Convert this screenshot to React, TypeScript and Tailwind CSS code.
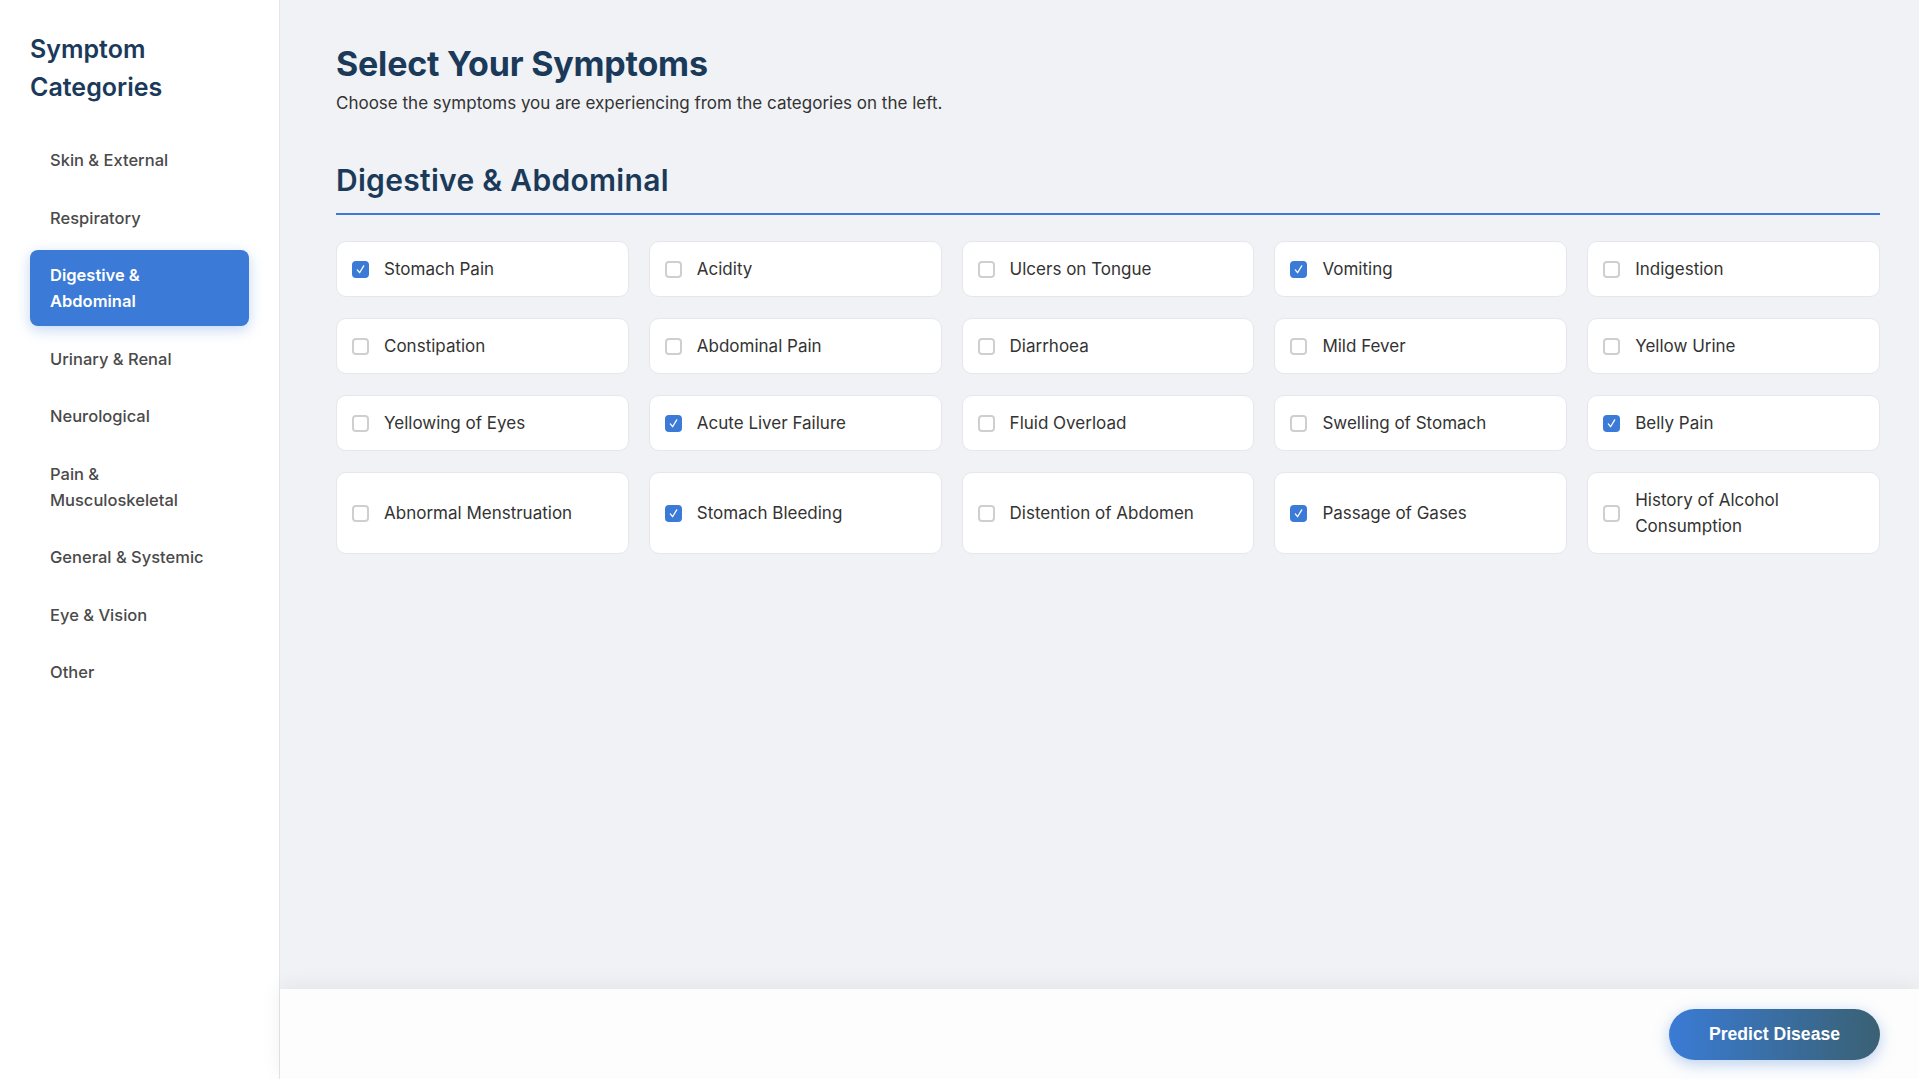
import React, { FC, useState } from "react";

const categories = [
  "Skin & External",
  "Respiratory",
  "Digestive & Abdominal",
  "Urinary & Renal",
  "Neurological",
  "Pain & Musculoskeletal",
  "General & Systemic",
  "Eye & Vision",
  "Other",
];

const symptoms = [
  "Stomach Pain",
  "Acidity",
  "Ulcers on Tongue",
  "Vomiting",
  "Indigestion",
  "Constipation",
  "Abdominal Pain",
  "Diarrhoea",
  "Mild Fever",
  "Yellow Urine",
  "Yellowing of Eyes",
  "Acute Liver Failure",
  "Fluid Overload",
  "Swelling of Stomach",
  "Belly Pain",
  "Abnormal Menstruation",
  "Stomach Bleeding",
  "Distention of Abdomen",
  "Passage of Gases",
  "History of Alcohol Consumption",
];

const SymptomCard: FC<{ label: string; checked: boolean; onToggle: () => void }> = (props) => {
  return (
    <label
      className="flex items-center gap-[15px] bg-white border border-[#e4e7ec] rounded-[10px] px-[15px] py-[14px] cursor-pointer"
      onClick={props.onToggle}
    >
      {props.checked ? (
        <span className="w-[17px] h-[17px] shrink-0 rounded-[4px] bg-[#3b7ad6] flex items-center justify-center">
          <svg width="11" height="11" viewBox="0 0 12 12" fill="none">
            <path d="M2.5 6.5 L5 9.5 L9.5 2" stroke="white" strokeWidth="1.4" strokeLinecap="round" strokeLinejoin="round" />
          </svg>
        </span>
      ) : (
        <span className="w-[17px] h-[17px] shrink-0 rounded-[4px] border-2 border-[#cfcfcf] bg-white" />
      )}
      <span className="text-[17px] leading-[26px] text-[#333]">{props.label}</span>
    </label>
  );
};

const App: FC = () => {
  const [active, setActive] = useState("Digestive & Abdominal");
  const [selected, setSelected] = useState<string[]>([
    "Stomach Pain",
    "Vomiting",
    "Acute Liver Failure",
    "Belly Pain",
    "Stomach Bleeding",
    "Passage of Gases",
  ]);

  const toggle = (s: string) =>
    setSelected((prev) => (prev.includes(s) ? prev.filter((x) => x !== s) : [...prev, s]));

  return (
    <div className="flex h-screen bg-[#f0f2f5] font-['Inter',sans-serif]">
      <aside className="w-[280px] shrink-0 bg-white border-r border-[#e3e5ea] px-[30px] pt-[30px]">
        <h2 className="text-[25px] leading-[38px] font-semibold text-[#1b3a5a] w-[180px]">
          Symptom Categories
        </h2>
        <nav className="mt-[29px] flex flex-col gap-[7.5px]">
          {categories.map((c) => (
            <div
              key={c}
              onClick={() => setActive(c)}
              className={`pl-5 pr-[30px] py-3 rounded-lg text-[16.5px] leading-[26px] cursor-pointer ${
                c === active
                  ? "bg-[#3b7ad6] text-white font-semibold shadow-[0_4px_14px_rgba(59,122,214,0.3)]"
                  : "text-[#4a4a4a] font-medium"
              }`}
            >
              {c}
            </div>
          ))}
        </nav>
      </aside>

      <main className="flex-1 flex flex-col min-w-0">
        <div className="flex-1 pl-[56px] pr-[39px] pt-[43px]">
          <h1 className="text-[34px] leading-[41px] font-bold text-[#1b3a5a] tracking-[-0.2px]">
            Select Your Symptoms
          </h1>
          <p className="mt-[7px] text-[17px] leading-[24px] text-[#333]">
            Choose the symptoms you are experiencing from the categories on the left.
          </p>

          <div className="mt-[48px] border-b-2 border-[#3b7ad6] pb-4">
            <h3 className="text-[30px] leading-[34px] font-semibold text-[#1b3a5a] tracking-[0.3px]">
              Digestive &amp; Abdominal
            </h3>
          </div>

          <div className="mt-[26px] grid grid-cols-5 gap-x-[20px] gap-y-[21px]">
            {symptoms.map((s) => (
              <SymptomCard key={s} label={s} checked={selected.includes(s)} onToggle={() => toggle(s)} />
            ))}
          </div>
        </div>

        <footer className="h-[90px] shrink-0 bg-[#fdfdfd] flex items-center justify-end pr-[39px] shadow-[0_-4px_20px_rgba(0,0,0,0.06)]">
          <button className="h-[51px] px-[40px] rounded-full bg-gradient-to-r from-[#3a7bd5] to-[#3a6073] text-white text-[17.6px] font-bold font-['Liberation_Sans',Arial,sans-serif] shadow-[0_4px_15px_rgba(58,123,213,0.35)]">
            Predict Disease
          </button>
        </footer>
      </main>
    </div>
  );
};

export default App;
